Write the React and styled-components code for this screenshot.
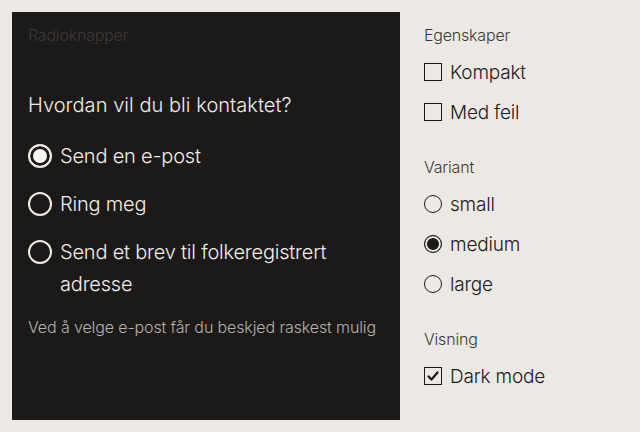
import React, { useState } from "react";
import styled, { createGlobalStyle } from "styled-components";

const GlobalStyle = createGlobalStyle`
  html, body {
    margin: 0;
    padding: 0;
    background: #ece9e4;
    font-family: Inter, "Liberation Sans", sans-serif;
    font-weight: 300;
    letter-spacing: -0.2px;
  }
`;

const Page = styled.div`
  display: flex;
  gap: 24px;
  padding: 12px;
  align-items: flex-start;
`;

const Panel = styled.section`
  width: 388px;
  height: 408px;
  box-sizing: border-box;
  padding: 11px 16px;
  background: #1c1a19;
  color: #f0ede8;
`;

const PanelTitle = styled.div`
  font-size: 16px;
  line-height: 24px;
  color: #3b3937;
`;

const Fieldset = styled.fieldset`
  border: 0;
  margin: 42px 0 0;
  padding: 0;
  min-width: 0;
`;

const Legend = styled.legend`
  padding: 0;
  font-size: 20px;
  line-height: 32px;
  letter-spacing: 0.05px;
  margin-bottom: 11px;
`;

const Option = styled.label`
  display: flex;
  align-items: flex-start;
  gap: 8px;
  padding: 8px 0;
  font-size: 20px;
  line-height: 32px;
  cursor: pointer;
`;

const RadioDot = styled.span`
  flex: none;
  width: 24px;
  height: 24px;
  margin-top: 4px;
  box-sizing: border-box;
  border-radius: 50%;
  border: 2px solid #f0ede8;
  background: ${(p) => (p.$checked ? "#f6f4f0" : "transparent")};
  box-shadow: ${(p) => (p.$checked ? "inset 0 0 0 3px #1c1a19" : "none")};
`;

const Helper = styled.p`
  margin: 7px 0 0;
  font-size: 16px;
  line-height: 24px;
  letter-spacing: -0.12px;
  white-space: nowrap;
  color: #b5b1ac;
`;

const Side = styled.aside`
  display: flex;
  flex-direction: column;
  gap: 23px;
  padding-top: 11px;
  color: #1c1a19;
`;

const Group = styled.div`
  display: flex;
  flex-direction: column;
`;

const GroupTitle = styled.div`
  font-size: 16px;
  line-height: 24px;
  color: #3b3937;
  margin-bottom: 5px;
`;

const Row = styled.label`
  display: flex;
  align-items: center;
  gap: 8px;
  height: 40px;
  font-size: 19px;
  cursor: pointer;
`;

const Box = styled.span`
  flex: none;
  width: 18px;
  height: 18px;
  box-sizing: border-box;
  border: 1.5px solid #1c1a19;
  display: flex;
  align-items: center;
  justify-content: center;
`;

const SmallRadio = styled.span`
  flex: none;
  width: 18px;
  height: 18px;
  box-sizing: border-box;
  border-radius: 50%;
  border: 1.5px solid #1c1a19;
  background: ${(p) => (p.$checked ? "#1c1a19" : "transparent")};
  box-shadow: ${(p) => (p.$checked ? "inset 0 0 0 2px #ece9e4" : "none")};
`;

const Check = () => (
  <svg width="14" height="14" viewBox="0 0 14 14" fill="none">
    <path d="M2.5 7.5 L5.5 10.5 L11.5 3.5" stroke="#1c1a19" strokeWidth="2.2" strokeLinecap="round" strokeLinejoin="round" />
  </svg>
);

const contactOptions = [
  "Send en e-post",
  "Ring meg",
  "Send et brev til folkeregistrert adresse",
];

export default function App() {
  const [contact, setContact] = useState(0);
  const [variant, setVariant] = useState("medium");
  const [flags, setFlags] = useState({ kompakt: false, feil: false, dark: true });
  const toggle = (k) => setFlags((f) => ({ ...f, [k]: !f[k] }));

  return (
    <>
      <GlobalStyle />
      <Page>
        <Panel>
          <PanelTitle>Radioknapper</PanelTitle>
          <Fieldset>
            <Legend>Hvordan vil du bli kontaktet?</Legend>
            {contactOptions.map((o, i) => (
              <Option key={o} onClick={() => setContact(i)}>
                <RadioDot $checked={contact === i} />
                <span>{o}</span>
              </Option>
            ))}
          </Fieldset>
          <Helper>Ved å velge e-post får du beskjed raskest mulig</Helper>
        </Panel>
        <Side>
          <Group>
            <GroupTitle>Egenskaper</GroupTitle>
            <Row onClick={() => toggle("kompakt")}>
              <Box>{flags.kompakt && <Check />}</Box>Kompakt
            </Row>
            <Row onClick={() => toggle("feil")}>
              <Box>{flags.feil && <Check />}</Box>Med feil
            </Row>
          </Group>
          <Group>
            <GroupTitle>Variant</GroupTitle>
            {["small", "medium", "large"].map((v) => (
              <Row key={v} onClick={() => setVariant(v)}>
                <SmallRadio $checked={variant === v} />
                {v}
              </Row>
            ))}
          </Group>
          <Group>
            <GroupTitle>Visning</GroupTitle>
            <Row onClick={() => toggle("dark")}>
              <Box>{flags.dark && <Check />}</Box>Dark mode
            </Row>
          </Group>
        </Side>
      </Page>
    </>
  );
}
